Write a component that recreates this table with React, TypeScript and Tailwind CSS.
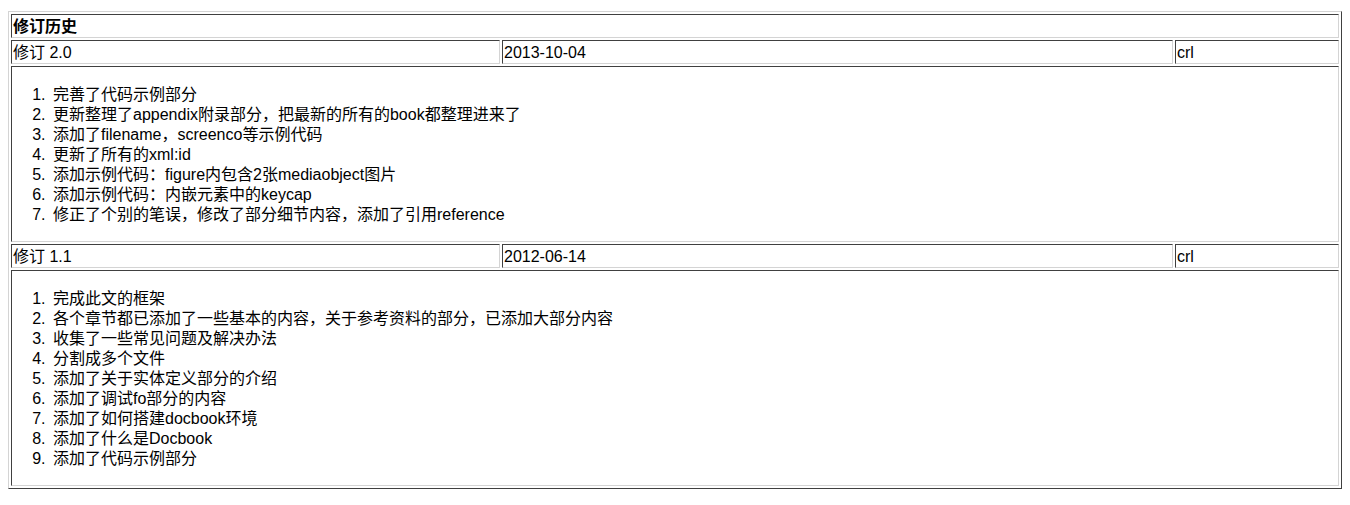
import React from "react";

const cell =
  "border border-solid border-t-[#404040] border-l-[#404040] border-b-[#d4d4d4] border-r-[#d4d4d4] px-[1px] pt-[2px] pb-0";

const revisions = [
  {
    rev: "修订 2.0",
    date: "2013-10-04",
    author: "crl",
    items: [
      "完善了代码示例部分",
      "更新整理了appendix附录部分，把最新的所有的book都整理进来了",
      "添加了filename，screenco等示例代码",
      "更新了所有的xml:id",
      "添加示例代码：figure内包含2张mediaobject图片",
      "添加示例代码：内嵌元素中的keycap",
      "修正了个别的笔误，修改了部分细节内容，添加了引用reference",
    ],
  },
  {
    rev: "修订 1.1",
    date: "2012-06-14",
    author: "crl",
    items: [
      "完成此文的框架",
      "各个章节都已添加了一些基本的内容，关于参考资料的部分，已添加大部分内容",
      "收集了一些常见问题及解决办法",
      "分割成多个文件",
      "添加了关于实体定义部分的介绍",
      "添加了调试fo部分的内容",
      "添加了如何搭建docbook环境",
      "添加了什么是Docbook",
      "添加了代码示例部分",
    ],
  },
];

export default function App() {
  return (
    <div
      className="min-h-[505px] bg-white pt-[11px] px-[8px] text-black text-[16px] leading-[20px]"
      style={{ fontFamily: '"Liberation Sans", Arial, "Noto Sans CJK SC", sans-serif' }}
    >
      <div className="grid grid-cols-[489px_671px_1fr] gap-[2px] p-[2px] border border-solid border-t-[#d4d4d4] border-l-[#d4d4d4] border-b-[#404040] border-r-[#404040]">
        <div className={`${cell} col-span-3 font-bold`}>修订历史</div>
        {revisions.map((r) => (
          <React.Fragment key={r.rev}>
            <div className={cell}>{r.rev}</div>
            <div className={cell}>{r.date}</div>
            <div className={cell}>{r.author}</div>
            <div className={`${cell} col-span-3`}>
              <ol className="list-decimal pl-[37px] my-[16px]">
                {r.items.map((it, i) => (
                  <li key={i} className="pl-[3px]">{it}</li>
                ))}
              </ol>
            </div>
          </React.Fragment>
        ))}
      </div>
    </div>
  );
}
